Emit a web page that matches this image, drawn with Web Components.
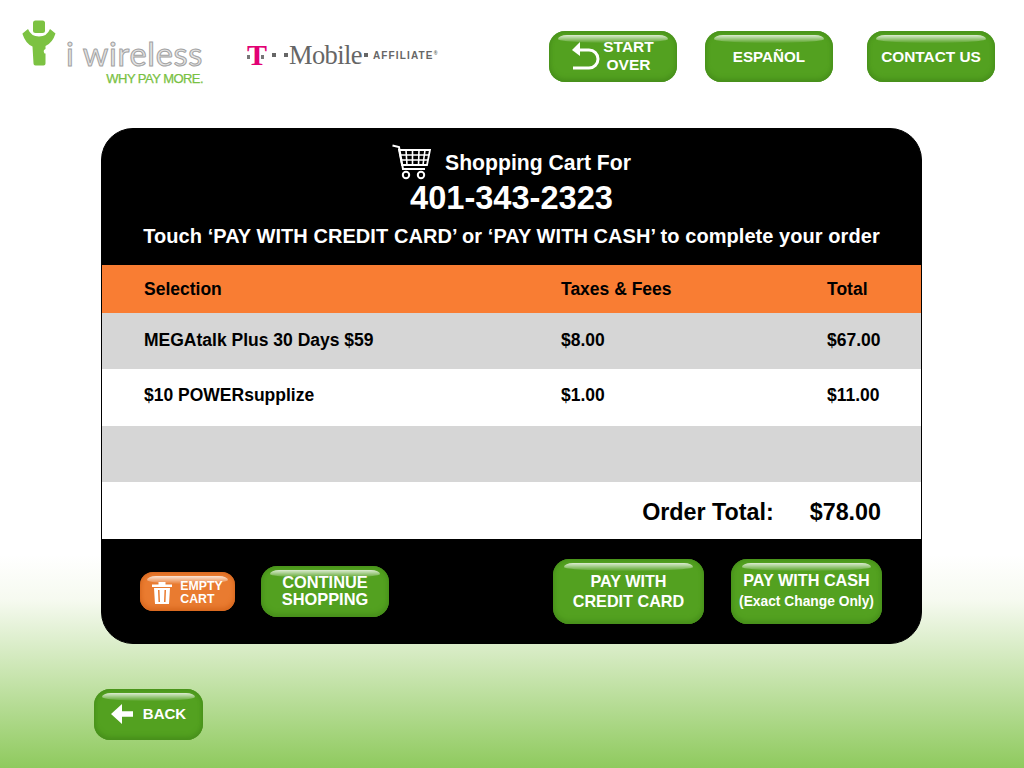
<!DOCTYPE html>
<html lang="en">
<head>
<meta charset="utf-8">
<title>Shopping Cart</title>
<style>
  html, body { margin: 0; padding: 0; }
  body {
    width: 1024px; height: 768px; overflow: hidden;
    font-family: "Liberation Sans", Arial, sans-serif;
    background: linear-gradient(#fff 0, #fff 555px, #f6faf0 600px, #8fca5e 768px);
  }
  kiosk-header { height: 128px; }
  back-row { margin: 45px 0 0 94px; }
</style>
</head>
<body>
  <kiosk-header>
    <brand-logos></brand-logos>
    <gloss-button slot="actions" w="128" h="51" icon="undo" size="15.5" lh="18" pb="2">START<br>OVER</gloss-button>
    <gloss-button slot="actions" w="128" h="51" size="15.2">ESPAÑOL</gloss-button>
    <gloss-button slot="actions" w="128" h="51" size="15.4" style="margin-left:6px">CONTACT US</gloss-button>
  </kiosk-header>

  <cart-panel phone="401-343-2323">
    <cart-row kind="head" a="Selection" b="Taxes &amp; Fees" c="Total"></cart-row>
    <cart-row kind="grey" a="MEGAtalk Plus 30 Days $59" b="$8.00" c="$67.00"></cart-row>
    <cart-row kind="white" a="$10 POWERsupplize" b="$1.00" c="$11.00"></cart-row>
    <cart-row kind="grey"></cart-row>
    <order-total amount="$78.00"></order-total>

    <gloss-button slot="left" w="95" h="39" r="13" color="orange" icon="trash" size="12.3" lh="13" align="left" pt="2">EMPTY<br>CART</gloss-button>
    <gloss-button slot="left" w="128" h="51" size="16.4" lh="17" pb="2">CONTINUE<br>SHOPPING</gloss-button>
    <gloss-button slot="right" w="151" h="65" size="16.2" lh="20" pb="2">PAY WITH<br>CREDIT CARD</gloss-button>
    <gloss-button slot="right" w="151" h="65" size="16.2" lh="20" pb="2">PAY WITH CASH<br><small style="font-size:13.8px">(Exact Change Only)</small></gloss-button>
  </cart-panel>

  <back-row>
    <gloss-button w="109" h="51" icon="back" size="15" pb="2">BACK</gloss-button>
  </back-row>

<script>
  var ICONS = {
    undo: '<svg width="28" height="28" viewBox="0 0 28 28" style="margin-right:3px"><path d="M6 8h11a8.500 8.500 0 0 1 0 18H1" fill="none" stroke="#fff" stroke-width="3"/><path d="M0 8 8 0v14z" fill="#fff"/></svg>',
    trash: '<svg width="20" height="22" viewBox="0 0 20 22" style="margin-right:8px"><path d="M0 2.500h20v2.500H0zM6.500 0h7v2.500h-7z" fill="#fff"/><path d="M2 6h16l-1 16H3zM6 8l.5 12h1.500L7.500 8zM12.500 8 12 20h1.500L14 8z" fill="#fff" fill-rule="evenodd"/></svg>',
    back: '<svg width="22" height="20" viewBox="0 0 22 20" style="margin-right:10px"><path d="M0 10 11 0v7.200h11v5.600H11V20z" fill="#fff"/></svg>'
  };

  class GlossButton extends HTMLElement {
    connectedCallback() {
      if (this.shadowRoot) return;
      var a = n => this.getAttribute(n);
      var orange = a('color') === 'orange';
      var root = this.attachShadow({ mode: 'open' });
      root.innerHTML = `
<style>
  :host {
    display: inline-flex; align-items: center; justify-content: center;
    position: relative; box-sizing: border-box; flex: none;
    width: ${a('w')}px; height: ${a('h')}px;
    padding: ${a('pt') || 0}px 0 ${a('pb') || 0}px;
    border-radius: ${a('r') || 16}px;
    background: ${orange ? '#e97b30' : '#53a120'};
    box-shadow: inset 0 -3px 5px ${orange ? '#d8681f' : '#478f1b'}, inset 0 1px 4px ${orange ? '#d4661f' : '#468e1a'};
    color: #fff; font: bold ${a('size') || 16}px/${a('lh') || 20}px "Liberation Sans", Arial, sans-serif;
    text-align: ${a('align') || 'center'};
  }
  :host::before {
    content: ""; position: absolute; left: 7%; right: 7%; top: 4px; height: 8px;
    border-radius: 9px 9px 50% 50% / 4px 4px 4px 4px;
    background: linear-gradient(rgba(255,255,255,.8), rgba(255,255,255,.03));
    filter: blur(.7px);
  }
  .wrap { display: inline-flex; align-items: center; position: relative; }
  svg { display: block; flex: none; }
</style>
<span class="wrap">${ICONS[a('icon')] || ''}<span><slot></slot></span></span>`;
    }
  }

  class KioskHeader extends HTMLElement {
    constructor() {
      super();
      this.attachShadow({ mode: 'open' }).innerHTML = `
<style>
  :host { display: flex; box-sizing: border-box; padding: 31px 29px 0 0; justify-content: space-between; align-items: flex-start; }
  .actions { display: flex; gap: 28px; }
</style>
<slot></slot>
<div class="actions"><slot name="actions"></slot></div>`;
    }
  }

  class BrandLogos extends HTMLElement {
    constructor() {
      super();
      this.attachShadow({ mode: 'open' }).innerHTML = `
<style>
  :host { display: flex; align-items: flex-start; margin-top: -11px; padding-left: 22px; }
  svg { display: block; flex: none; }
  .iw { display: flex; width: 181px; }
  .iw svg { margin-right: 5px; }
  .words { width: 137px; }
  .name {
    font: 400 32.500px/32px Lato, sans-serif; color: #e4e4e4; white-space: nowrap;
    -webkit-text-stroke: 1px #a2a2a2; margin-top: 18px; height: 33px; letter-spacing: .7px;
  }
  .tag { font: 13px/14px "Liberation Sans", Arial, sans-serif; letter-spacing: -.55px; color: #79c143; text-align: right; margin-top: 1px; -webkit-text-stroke: .25px #79c143; white-space: nowrap; }
  .tm { display: flex; align-items: center; margin: 22px 0 0 44px; height: 26px; color: #666; }
  .t { position: relative; font: bold 30px/26px "Liberation Serif", serif; color: #e20074; width: 17px; text-align: center; }
  .t::before, .t::after { content: ""; position: absolute; top: 13px; width: 3px; height: 4px; background: #777; }
  .t::before { left: 0; }
  .t::after { right: 0; }
  .sq { width: 4px; height: 4px; background: #666; flex: none; }
  .mobile { font: 26.500px/26px "Liberation Serif", serif; letter-spacing: -.6px; margin: 0 2px 0 1px; }
  .aff { font: bold 10px/12px "Liberation Sans", Arial, sans-serif; letter-spacing: 1.15px; margin: 2px 0 0 5px; }
  sup { font-size: 5px; line-height: 0; }
</style>
<div class="iw">
  <svg width="39" height="48" viewBox="22 20 39 48" aria-hidden="true">
    <rect x="33" y="20.500" width="12" height="12.500" rx="2.500" fill="#7cc242"/>
    <path d="M22.500 33.500 28 29q3 7.500 11 7.500t11-7.500l5.500 4.500q-3 9.500-10 12.500v3q-3 1-1 4.500h1v10q0 2-2 2h-8q-2 0-2-2l-1-17q-7-3-10-12.500z" fill="#7cc242"/>
  </svg>
  <div class="words">
    <div class="name">i wireless</div>
    <div class="tag">WHY PAY MORE.</div>
  </div>
</div>
<div class="tm">
  <span class="t">T</span>
  <span class="sq" style="margin-left:8px"></span>
  <span class="sq" style="margin-left:8px"></span>
  <span class="mobile">Mobile</span>
  <span class="sq"></span>
  <span class="aff">AFFILIATE<sup>®</sup></span>
</div>`;
    }
  }

  class CartPanel extends HTMLElement {
    connectedCallback() {
      if (this.shadowRoot) return;
      var root = this.attachShadow({ mode: 'open' });
      root.innerHTML = `
<style>
  :host {
    display: block; box-sizing: border-box; width: 821px; height: 516px; margin-left: 101px;
    background: #000; border: 1px solid #000; border-radius: 32px; overflow: hidden; color: #fff;
  }
  header { height: 136px; box-sizing: border-box; padding-top: 14px; display: flex; flex-direction: column; align-items: center; }
  .title { display: flex; align-items: center; height: 38px; font: bold 21.200px/24px "Liberation Sans", Arial, sans-serif; }
  .title svg { display: block; margin-right: 14px; }
  .title span { position: relative; top: 1px; }
  .phone { font: bold 32.600px/36px "Liberation Sans", Arial, sans-serif; margin-top: -1px; }
  .hint { font: bold 20px/24px "Liberation Sans", Arial, sans-serif; letter-spacing: .06px; margin-top: 8px; white-space: nowrap; }
  footer { height: 105px; display: flex; align-items: center; justify-content: space-between; padding: 0 39px 0 38px; }
  .group { display: flex; align-items: center; gap: 26px; }
  .group.pay { gap: 27px; }
</style>
<header>
  <div class="title">
    <svg width="39" height="36" viewBox="0 0 39 36" fill="none" stroke="#fff">
      <path d="M.500 1.500 7 3l4 22h22" stroke-width="2"/>
      <path d="M7 6h31l-3 15H10z" stroke-width="1.800"/>
      <path d="M14 6l1 15M20.500 6v15M27 6l-.5 15M33 6l-2 15M8 11h29M9 16h27" stroke-width="1.600"/>
      <circle cx="14" cy="31" r="3.200" stroke-width="2"/><circle cx="29" cy="31" r="3.200" stroke-width="2"/>
    </svg>
    <span>Shopping Cart For</span>
  </div>
  <div class="phone">${this.getAttribute('phone')}</div>
  <div class="hint">Touch ‘PAY WITH CREDIT CARD’ or ‘PAY WITH CASH’ to complete your order</div>
</header>
<slot></slot>
<footer>
  <div class="group"><slot name="left"></slot></div>
  <div class="group pay"><slot name="right"></slot></div>
</footer>`;
    }
  }

  class CartRow extends HTMLElement {
    connectedCallback() {
      if (this.shadowRoot) return;
      var a = n => this.getAttribute(n) || '';
      var bg = { head: '#f97d33', grey: '#d6d6d6', white: '#fff' }[a('kind')];
      var h = a('kind') === 'head' ? 48 : 56.400;
      var pb = { head: 0, grey: 2, white: 6 }[a('kind')];
      this.attachShadow({ mode: 'open' }).innerHTML = `
<style>
  :host {
    display: grid; grid-template-columns: 417px 266px 1fr; align-items: center;
    height: ${h}px; box-sizing: border-box; padding: 0 0 ${pb}px 42px; background: ${bg};
    color: #000; font: bold 17.500px/20px "Liberation Sans", Arial, sans-serif;
  }
</style>
<span>${a('a')}</span><span>${a('b')}</span><span>${a('c')}</span>`;
    }
  }

  class OrderTotal extends HTMLElement {
    connectedCallback() {
      if (this.shadowRoot) return;
      this.attachShadow({ mode: 'open' }).innerHTML = `
<style>
  :host {
    display: flex; justify-content: flex-end; align-items: center; gap: 36px;
    height: 57px; box-sizing: border-box; padding: 2px 40px 0 0; background: #fff;
    color: #000; font: bold 23.300px/26px "Liberation Sans", Arial, sans-serif;
  }
</style>
<span>Order Total:</span><span>${this.getAttribute('amount')}</span>`;
    }
  }

  class BackRow extends HTMLElement {
    constructor() {
      super();
      this.attachShadow({ mode: 'open' }).innerHTML = '<style>:host { display: block; }</style><slot></slot>';
    }
  }

  customElements.define('gloss-button', GlossButton);
  customElements.define('kiosk-header', KioskHeader);
  customElements.define('brand-logos', BrandLogos);
  customElements.define('cart-panel', CartPanel);
  customElements.define('cart-row', CartRow);
  customElements.define('order-total', OrderTotal);
  customElements.define('back-row', BackRow);
</script>
</body>
</html>
